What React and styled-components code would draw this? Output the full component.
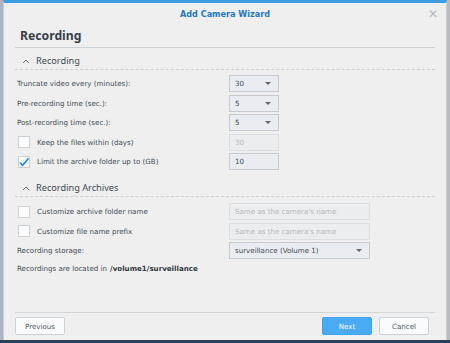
import React from "react"
import styled, { createGlobalStyle } from 'styled-components'

const Global = createGlobalStyle`
html, body {
  margin: 0;
  padding: 0;
  width: 450px;
  height: 343px;
  overflow: hidden;
  background: #b9c2cb;
}
* { box-sizing: border-box; }
`

const Desktop = styled.div`
width: 450px;
height: 343px;
display: flex;
flex-direction: column;
`

const Stage = styled.div`
flex: 1;
display: flex;
padding: 0 3px;
background: linear-gradient(90deg, #aab6c2 0 3px, transparent 3px calc(100% - 3px), #b8bcc0 calc(100% - 3px));
`

const Taskbar = styled.div`
height: 3px;
background: #2c3f57;
`

const Dialog = styled.div`
flex: 1;
display: flex;
flex-direction: column;
background: #efefef;
border-top: 3px solid #3c9ce0;
border-left: 1px solid #c9cdd1;
border-right: 1px solid #c9cdd1;
font-family: "DejaVu Sans", Verdana, sans-serif;
font-size: 7.1px;
color: #404a54;
`

const TitleBar = styled.div`
position: relative;
height: 21px;
display: flex;
align-items: center;
justify-content: center;
font-family: "DejaVu Sans", sans-serif;
font-weight: bold;
font-size: 8.1px;
color: #1d79c2;
padding-top: 1px;
`

const Close = styled.span`
position: absolute;
right: 8px;
top: 4px;
font-family: "DejaVu Sans", sans-serif;
font-weight: normal;
font-size: 12px;
color: #b4b9be;
`

const Body = styled.div`
flex: 1;
display: flex;
flex-direction: column;
padding: 0 11px 0 11px;
`

const Heading = styled.div`
height: 24px;
display: flex;
align-items: center;
padding-left: 5px;
font-family: "Noto Sans", sans-serif;
font-weight: bold;
font-size: 12.2px;
color: #363f48;
border-bottom: 1px solid #cfd2d5;
`

const Section = styled.div`
display: flex;
align-items: center;
gap: 6px;
height: 21px;
margin-top: 1px;
padding: 3px 0 0 7px;
font-family: "Noto Sans", sans-serif;
font-size: 9.2px;
color: #404a54;
border-bottom: 1px dashed #cdd0d3;
`

const Chevron = styled.svg`
width: 8px;
height: 6px;
`

const Rows = styled.div`
display: flex;
flex-direction: column;
gap: ${p => p.$gap || 2.5}px;
padding: ${p => p.$pt || 5}px 0 0 0;
margin-bottom: ${p => p.$mb || 0}px;
`

const Row = styled.div`
display: grid;
grid-template-columns: 214px auto;
align-items: center;
height: 17px;
`

const Label = styled.div`
display: flex;
align-items: center;
padding-left: ${p => p.$check ? 3 : 2}px;
gap: 7px;
`

const Box = styled.span`
width: 12px;
height: 12px;
border: 1px solid #cbd0d4;
background: #fdfdfd;
display: flex;
align-items: center;
justify-content: center;
`

const Field = styled.div`
width: ${p => p.$w}px;
height: 17px;
border: 1px solid ${p => p.$disabled ? '#dcdfe2' : '#c6cacf'};
background: ${p => p.$disabled ? '#ebedef' : '#e9edf1'};
color: ${p => p.$disabled ? '#b3b8bd' : '#404a54'};
display: flex;
align-items: center;
justify-content: space-between;
padding: 0 5px 0 5px;
`

const Caret = styled.span`
width: 0;
height: 0;
border-left: 3.5px solid transparent;
border-right: 3.5px solid transparent;
border-top: 3.5px solid #5d666f;
margin-right: 2px;
`

const Info = styled.div`
height: 19px;
display: flex;
align-items: center;
padding-left: 2px;
b { margin-left: 3px; color: #2f3840; }
`

const Footer = styled.div`
margin: 0 11px 0 11px;
border-top: 1px solid #d4d7da;
display: flex;
align-items: center;
gap: 7px;
padding: 4px 6px 5px 0;
`

const Button = styled.button`
width: 50px;
height: 18px;
font-family: "DejaVu Sans", sans-serif;
font-size: 7.1px;
border: 1px solid ${p => p.$primary ? '#3ea2ef' : '#cdd1d5'};
background: ${p => p.$primary ? '#48abf4' : '#fafbfc'};
color: ${p => p.$primary ? '#ffffff' : '#505a64'};
border-radius: 2px;
padding: 0;
margin-left: ${p => p.$push ? 'auto' : '0'};
`

const Check = () => (
  <svg width="11" height="10" viewBox="0 0 11 10">
    <path d="M1 5.5 L4 8.5 L10.5 1" fill="none" stroke="#1c88e6" strokeWidth="1.8" />
  </svg>
)

const Up = () => (
  <Chevron viewBox="0 0 8 6">
    <path d="M1 5 L4 2 L7 5" fill="none" stroke="#6a737c" strokeWidth="1" />
  </Chevron>
)

const CheckLabel = ({ checked, children }) => (
  <Label $check>
    <Box>{checked && <Check />}</Box>
    <span>{children}</span>
  </Label>
)

export default function App() {
  return (
    <Desktop>
      <Global />
      <Stage>
        <Dialog>
          <TitleBar>
            Add Camera Wizard
            <Close>✕</Close>
          </TitleBar>
          <Body>
            <Heading>Recording</Heading>
            <Section><Up />Recording</Section>
            <Rows $gap={2.5} $pt={5} $mb={5}>
              <Row>
                <Label>Truncate video every (minutes):</Label>
                <Field $w={50}>30<Caret /></Field>
              </Row>
              <Row>
                <Label>Pre-recording time (sec.):</Label>
                <Field $w={50}>5<Caret /></Field>
              </Row>
              <Row>
                <Label>Post-recording time (sec.):</Label>
                <Field $w={50}>5<Caret /></Field>
              </Row>
              <Row>
                <CheckLabel>Keep the files within (days)</CheckLabel>
                <Field $w={50} $disabled>30</Field>
              </Row>
              <Row>
                <CheckLabel checked>Limit the archive folder up to (GB)</CheckLabel>
                <Field $w={50}>10</Field>
              </Row>
            </Rows>
            <Section><Up />Recording Archives</Section>
            <Rows $gap={2.5} $pt={6}>
              <Row>
                <CheckLabel>Customize archive folder name</CheckLabel>
                <Field $w={141} $disabled>Same as the camera's name</Field>
              </Row>
              <Row>
                <CheckLabel>Customize file name prefix</CheckLabel>
                <Field $w={141} $disabled>Same as the camera's name</Field>
              </Row>
              <Row>
                <Label>Recording storage:</Label>
                <Field $w={141}>surveillance (Volume 1)<Caret /></Field>
              </Row>
            </Rows>
            <Info>Recordings are located in<b>/volume1/surveillance</b></Info>
          </Body>
          <Footer>
            <Button>Previous</Button>
            <Button $primary $push>Next</Button>
            <Button>Cancel</Button>
          </Footer>
        </Dialog>
      </Stage>
      <Taskbar />
    </Desktop>
  )
}
